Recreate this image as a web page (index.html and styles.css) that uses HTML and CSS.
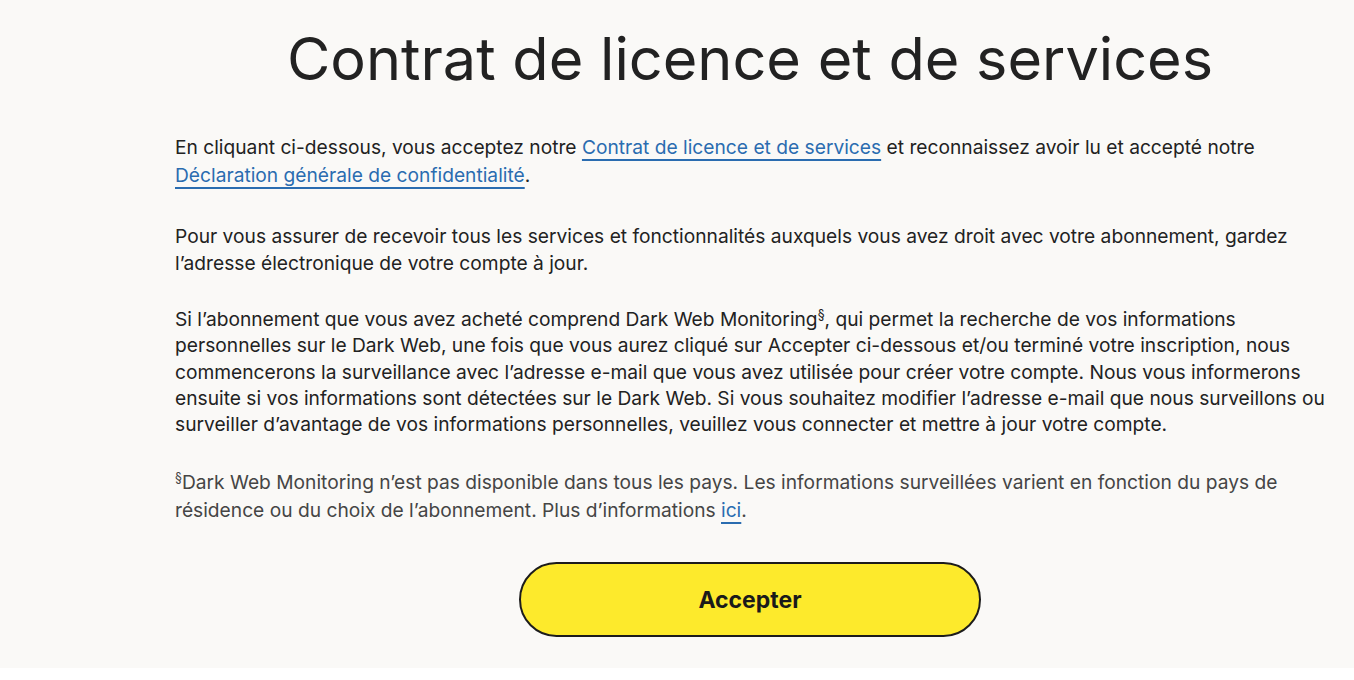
FILE: index.html
```html
<!DOCTYPE html>
<html lang="fr">
<head>
<meta charset="utf-8">
<title>Contrat de licence et de services</title>
<link rel="stylesheet" href="styles.css">
</head>
<body>
<main class="page">
  <div class="content">
    <h1 class="title">Contrat de licence et de services</h1>
    <p class="para para-links">En cliquant ci-dessous, vous acceptez notre <a class="link" href="#">Contrat de licence et de services</a> et reconnaissez avoir lu et accepté notre <a class="link" href="#">Déclaration générale de confidentialité</a>.</p>
    <p class="para para-2">Pour vous assurer de recevoir tous les services et fonctionnalités auxquels vous avez droit avec votre abonnement, gardez l’adresse électronique de votre compte à jour.</p>
    <p class="para para-tight">Si l’abonnement que vous avez acheté comprend Dark Web Monitoring<sup class="sup">§</sup>, qui permet la recherche de vos informations personnelles sur le Dark Web, une fois que vous aurez cliqué sur Accepter ci-dessous et/ou terminé votre inscription, nous commencerons la surveillance avec l’adresse e-mail que vous avez utilisée pour créer votre compte. Nous vous informerons ensuite si vos informations sont détectées sur le Dark Web. Si vous souhaitez modifier l’adresse e-mail que nous surveillons ou surveiller d’avantage de vos informations personnelles, veuillez vous connecter et mettre à jour votre compte.</p>
    <p class="para para-note"><sup class="sup">§</sup>Dark Web Monitoring n’est pas disponible dans tous les pays. Les informations surveillées varient en fonction du pays de résidence ou du choix de l’abonnement. Plus d’informations <a class="link" href="#">ici</a>.</p>
    <div class="actions">
      <button class="btn" type="button">Accepter</button>
    </div>
  </div>
</main>
<div class="footer-strip"></div>
</body>
</html>
```
FILE: styles.css
```css
html, body {
  margin: 0;
  padding: 0;
  background: #ffffff;
}
body {
  font-family: "Inter", "Noto Sans", sans-serif;
  color: #222222;
}
.page {
  background: #faf9f7;
  height: 668px;
  overflow: hidden;
}
.content {
  margin-left: 175px;
  width: 1150px;
  display: flex;
  flex-direction: column;
}
.title {
  margin: 22px 0 0 0;
  font-size: 59.4px;
  font-weight: 400;
  line-height: 72px;
  text-align: center;
  color: #222222;
}
.para {
  margin: 0;
  font-size: 19.2px;
  line-height: 27px;
}
.para-links {
  margin-top: 39px;
  line-height: 28px;
}
.para-2 { margin-top: 34px; }
.para-tight {
  margin-top: 29px;
  line-height: 26.3px;
}
.para-note {
  margin-top: 31px;
  color: #454545;
  line-height: 28px;
}
.link {
  color: #2a6cb0;
  text-decoration: underline;
  text-decoration-thickness: 2px;
  text-underline-offset: 5px;
}
.sup {
  font-size: 12.5px;
  line-height: 0;
  vertical-align: 7px;
}
.actions {
  display: flex;
  justify-content: center;
  margin-top: 38px;
}
.btn {
  width: 462px;
  height: 75px;
  background: #fdea2c;
  border: 2px solid #1c1c1c;
  border-radius: 38px;
  font-family: "Inter", sans-serif;
  font-weight: 700;
  font-size: 23px;
  color: #1a1a1a;
  cursor: pointer;
}
.footer-strip {
  height: 12px;
  background: #ffffff;
}
```
